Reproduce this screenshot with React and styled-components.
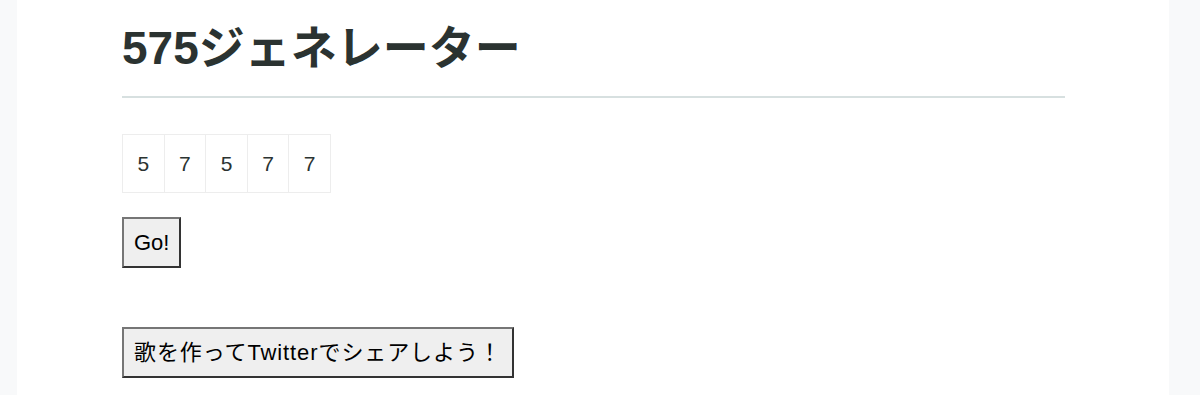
import React from "react";
import styled, { createGlobalStyle } from "styled-components";

const Global = createGlobalStyle`
  html, body { margin: 0; padding: 0; }
  body {
    background: #f8f9fa;
    font-family: "Liberation Sans", "Noto Sans CJK JP", sans-serif;
    color: #2b3331;
  }
`;

const Panel = styled.main`
  margin-left: 17px;
  width: 1152px;
  min-height: 395px;
  background: #ffffff;
  box-sizing: border-box;
  padding: 18px 104px 0 105px;
  display: flex;
  flex-direction: column;
  align-items: flex-start;
`;

const Title = styled.h1`
  margin: 0;
  font-size: 46px;
  line-height: 60px;
  font-weight: 700;
  color: #2b3331;
`;

const Rule = styled.hr`
  align-self: stretch;
  margin: 18px 0 0;
  border: 0;
  height: 2px;
  background: #d7e0e0;
`;

const Cells = styled.div`
  margin-top: 36px;
  display: grid;
  grid-template-columns: repeat(5, 41.6px);
  border-top: 1px solid #ededed;
  border-left: 1px solid #ededed;
`;

const Cell = styled.div`
  height: 57px;
  display: flex;
  align-items: center;
  justify-content: center;
  border-right: 1px solid #ededed;
  border-bottom: 1px solid #ededed;
  font-size: 21px;
  color: #2b3331;
`;

const Button = styled.button`
  margin-top: ${(p) => p.$gap}px;
  height: 51px;
  padding: 0 10px;
  background: #efefef;
  border: 2px solid;
  border-color: #767676 #333333 #333333 #767676;
  font-family: "Liberation Sans", "Noto Sans CJK JP", sans-serif;
  font-size: 22px;
  line-height: 24px;
  color: #000;
  letter-spacing: ${(p) => p.$spacing || 0}px;
  cursor: pointer;
`;

export default function App() {
  const digits = [5, 7, 5, 7, 7];
  return (
    <>
      <Global />
      <Panel>
        <Title>575ジェネレーター</Title>
        <Rule />
        <Cells>
          {digits.map((d, i) => (
            <Cell key={i}>{d}</Cell>
          ))}
        </Cells>
        <Button $gap={24}>Go!</Button>
        <Button $gap={59} $spacing={0.9}>歌を作ってTwitterでシェアしよう！</Button>
      </Panel>
    </>
  );
}
